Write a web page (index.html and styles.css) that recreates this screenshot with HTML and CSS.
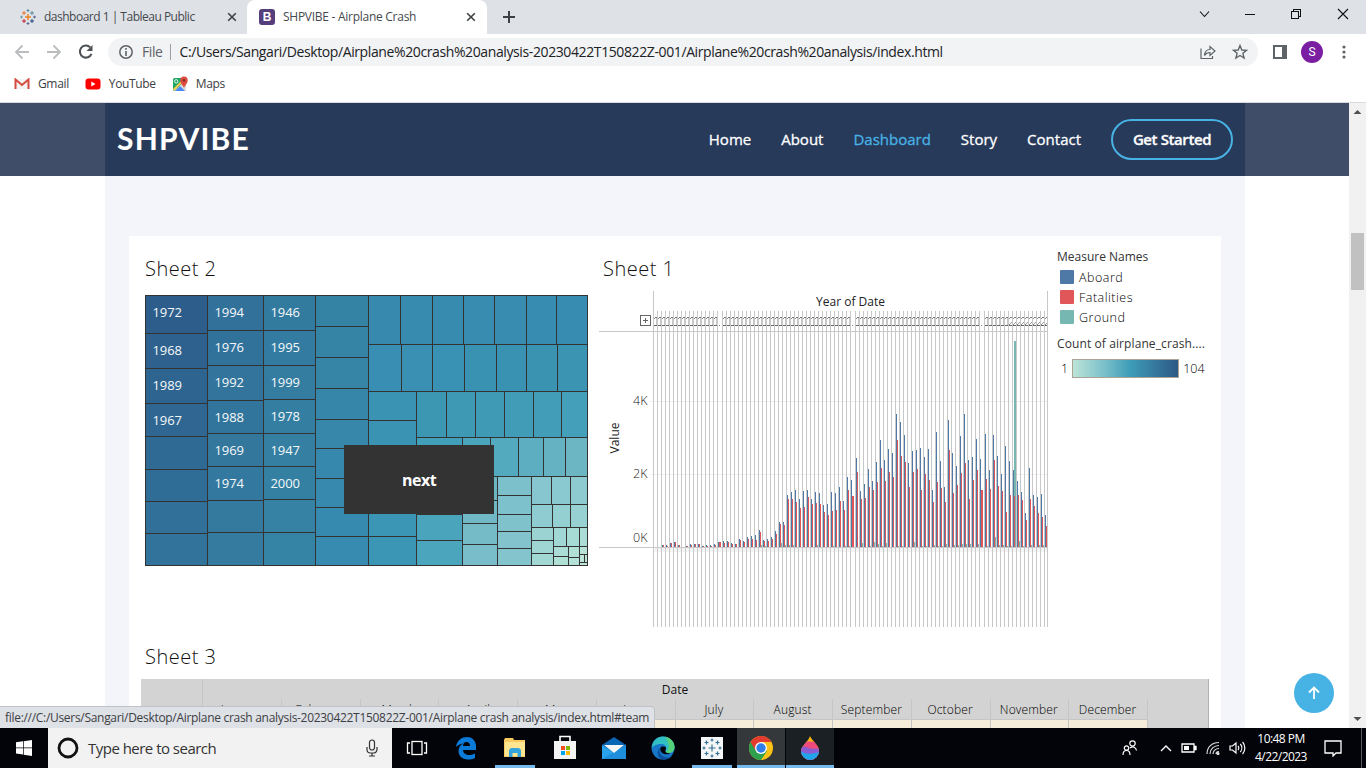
FILE: index.html
```html
<!DOCTYPE html>
<html lang="en">
<head>
<meta charset="utf-8">
<title>SHPVIBE - Airplane Crash</title>
<link rel="stylesheet" href="styles.css">
</head>
<body>
<div class="tabs">
  <div class="tab">
    <svg class="tab-icon" width="16" height="16" viewBox="0 0 16 16" fill="none" stroke-width="1">
      <path d="M8 5v6M5 8h6" stroke="#eb8124" stroke-width="1.5"/>
      <path d="M4 2v4M2 4h4" stroke="#e8762c"/><path d="M12 2v4M10 4h4" stroke="#59879b"/>
      <path d="M4 10v4M2 12h4" stroke="#c72037"/><path d="M12 10v4M10 12h4" stroke="#1f457e"/>
      <path d="M8 0v3M6.600 1.500h2.800" stroke="#59879b"/><path d="M8 13v3M6.600 14.500h2.800" stroke="#5c6692"/>
      <path d="M0 8h3M1.500 6.600v2.800" stroke="#7099a6"/><path d="M13 8h3M14.500 6.600v2.800" stroke="#5c6692"/>
    </svg>
    <span class="tab-title t1">dashboard 1 | Tableau Public</span>
    <svg class="tab-close" width="10" height="10" viewBox="0 0 10 10"><path d="M1.200 1.200l7.600 7.600M8.800 1.200l-7.600 7.600" stroke="#3c4043" stroke-width="1.600"/></svg>
  </div>
  <div class="tab active">
    <span class="boot">B</span>
    <span class="tab-title t2">SHPVIBE - Airplane Crash</span>
    <svg class="tab-close" width="10" height="10" viewBox="0 0 10 10"><path d="M1.200 1.200l7.600 7.600M8.800 1.200l-7.600 7.600" stroke="#3c4043" stroke-width="1.600"/></svg>
  </div>
  <svg class="plus" width="12" height="12" viewBox="0 0 12 12"><path d="M6 0v12M0 6h12" stroke="#3c4043" stroke-width="2"/></svg>
  <svg class="window-controls" width="150" height="14" viewBox="0 0 150 14" fill="none" stroke="#111" stroke-width="1.1">
    <path d="M1 4.500l4.500 5 4.500-5"/>
    <path d="M46 7.500h10" shape-rendering="crispEdges"/>
    <path d="M92.500 4.500h7v7h-7zM94.500 4.500v-2h7v7h-2" shape-rendering="crispEdges"/>
    <path d="M139 2l10 10M149 2l-10 10"/>
  </svg>
</div>

<div class="toolbar">
  <svg class="nav-arrows" width="84" height="20" viewBox="0 0 84 20" fill="none" stroke-width="1.800">
    <path d="M15 10H2M8.500 3.500L2 10l6.500 6.500" stroke="#babcbe"/>
    <path d="M33 10h13M39.500 3.500L46 10l-6.500 6.500" stroke="#babcbe"/>
    <path d="M76.200 5.400A6 6 0 1 0 77.500 11.800" stroke="#4d5155" stroke-width="2"/>
    <path d="M78.500 3v6h-6z" fill="#4d5155"/>
  </svg>
  <div class="omnibox">
    <svg width="14" height="14" viewBox="0 0 14 14"><circle cx="7" cy="7" r="6.200" fill="none" stroke="#5f6368" stroke-width="1.500"/><path d="M7 6v5M7 3v1.700" stroke="#5f6368" stroke-width="1.600"/></svg>
    <span class="scheme">File</span>
    <span class="url">C:/Users/Sangari/Desktop/Airplane%20crash%20analysis-20230422T150822Z-001/Airplane%20crash%20analysis/index.html</span>
    <svg class="omni-actions" width="48" height="16" viewBox="0 0 48 16" fill="none" stroke="#5f6368" stroke-width="1.200">
      <path d="M1 4.500V14.500h11.500V12"/><path d="M4.500 11.500c.3-4 2.500-6 5.500-6V2.500l5 4.500-5 4.500V8.500c-2.500 0-4.200 1-5.500 3z"/>
      <path d="M40 1.500l1.800 4.500 4.700.3-3.600 3 1.200 4.700L40 11.500 35.900 14l1.200-4.700-3.600-3 4.700-.3z" stroke-width="1.400"/>
    </svg>
  </div>
  <svg class="panel-icon" width="14" height="14" viewBox="0 0 14 14"><path d="M1 1h12v12H1z" fill="#fff" stroke="#5f6368" stroke-width="2"/><path d="M9 1h4v12H9z" fill="#5f6368"/></svg>
  <span class="avatar">S</span>
  <svg class="kebab" width="4" height="14" viewBox="0 0 4 14" fill="#5f6368"><circle cx="2" cy="2" r="1.600"/><circle cx="2" cy="7" r="1.600"/><circle cx="2" cy="12" r="1.600"/></svg>
</div>

<div class="bookmarks">
  <svg width="16" height="12" viewBox="0 0 16 12"><path d="M1 1h14v10H1z" fill="#f3f3f3"/><path d="M1.500 11V1.500L8 7l6.500-5.500V11" fill="none" stroke="#d54b3d" stroke-width="2"/></svg>
  <span class="b1">Gmail</span>
  <svg width="16" height="12" viewBox="0 0 16 12"><rect x=".5" y=".5" width="15" height="11" rx="3" fill="#f00"/><path d="M6.300 3.500v5L10.500 6z" fill="#fff"/></svg>
  <span class="b2">YouTube</span>
  <svg width="16" height="16" viewBox="0 0 16 16"><rect x="1" y="2" width="13" height="13" rx="1.500" fill="#1fa463"/><path d="M2 15L14 4v11z" fill="#dcdcdc"/><path d="M3 15l5-5 5 5z" fill="#4a89f3"/><path d="M1.500 14L13 2.500" stroke="#fcd04b" stroke-width="2"/><circle cx="4.200" cy="5.300" r="1.700" fill="none" stroke="#fff" stroke-width=".9"/><path d="M12 12C11 9 8.300 7.500 8.300 4.200a3.700 3.700 0 0 1 7.400 0C15.700 7.500 13 9 12 12z" fill="#dd4b3e"/><circle cx="12" cy="4.200" r="1.300" fill="#822f2b"/></svg>
  <span class="b3">Maps</span>
</div>

<div class="viewport">
  <div class="page">
    <header class="site-header">
      <div class="container">
        <span class="logo">SHPVIBE</span>
        <nav>
          <a>Home</a><a>About</a><a class="current">Dashboard</a><a>Story</a><a>Contact</a>
          <a class="get-started">Get Started</a>
        </nav>
      </div>
    </header>
    <section class="container team">
      <div class="card">
        <div class="sheets">
          <div class="sheet2">
            <h2>Sheet 2</h2>
            <div class="treewrap">
              <svg id="treemap" width="443" height="271" viewBox="145 295 443 271"></svg>
              <div class="next">next</div>
            </div>
          </div>
          <div class="sheet1">
            <h2>Sheet 1</h2>
            <svg id="bars" width="450" height="338" viewBox="599 290 450 338" shape-rendering="crispEdges"></svg>
          </div>
          <div class="legend">
            <div class="legend-title m">Measure Names</div>
            <div class="item"><i class="aboard"></i><span>Aboard</span></div>
            <div class="item"><i class="fatal"></i><span>Fatalities</span></div>
            <div class="item"><i class="ground"></i><span>Ground</span></div>
            <div class="legend-title c">Count of airplane_crash....</div>
            <div class="ramp-row"><span>1</span><i class="ramp"></i><span>104</span></div>
          </div>
        </div>
        <h2 class="s3">Sheet 3</h2>
        <div class="table">
          <div class="corner"></div>
          <div class="months">
            <div class="date">Date</div>
            <div class="month-row"><span>January</span><span>February</span><span>March</span><span>April</span><span>May</span><span>June</span><span>July</span><span>August</span><span>September</span><span>October</span><span>November</span><span>December</span></div>
            <div class="values"><i></i><i></i><i></i><i></i><i></i><i></i><i></i><i></i><i></i><i></i><i></i><i></i></div>
          </div>
          <div class="corner-end"></div>
        </div>
      </div>
    </section>
    <div class="to-top"><svg width="14" height="14" viewBox="0 0 14 14" fill="none" stroke="#fff" stroke-width="1.800"><path d="M7 13V1.500M2 6.500l5-5 5 5"/></svg></div>
    <div class="status"><span>file:///C:/Users/Sangari/Desktop/Airplane crash analysis-20230422T150822Z-001/Airplane crash analysis/index.html#team</span></div>
  </div>
  <div class="scrollbar">
    <svg width="17" height="17" viewBox="0 0 17 17"><path d="M4.500 11h8L8.500 7z" fill="#505050"/></svg>
    <div class="thumb"></div>
    <svg width="17" height="17" viewBox="0 0 17 17"><path d="M4.500 6h8l-4 4z" fill="#505050"/></svg>
  </div>
</div>

<div class="taskbar">
  <div class="start"><svg width="16" height="16" viewBox="0 0 16 16" fill="#fff"><path d="M0 2.300L7 1.300v6.300H0zM7.700 1.200L16 0v7.600H7.700zM0 8.300h7v6.300l-7-1zM7.700 8.300H16V16l-8.300-1.200z"/></svg></div>
  <div class="search">
    <svg width="22" height="22" viewBox="0 0 22 22"><circle cx="11" cy="11" r="9" fill="none" stroke="#111" stroke-width="2.800"/></svg>
    <span>Type here to search</span>
    <svg width="12" height="18" viewBox="0 0 12 18" fill="none" stroke="#333" stroke-width="1.200"><rect x="3.500" y="1" width="5" height="10" rx="2.500"/><path d="M1 8v2.500a3.500 3.500 0 0 0 3.500 3.500h3A3.500 3.500 0 0 0 11 10.500V8M6 14v3M3 17h6"/></svg>
  </div>
  <div class="app"><svg width="22" height="16" viewBox="0 0 22 16" fill="none" stroke="#fff" stroke-width="1.300"><rect x="6" y="1.500" width="10" height="13"/><path d="M4 3H1.500v10H4M18 3h2.500v10H18"/></svg></div>
  <div class="app"><svg width="22" height="24" viewBox="0 0 22 24"><path d="M1 11C2 4 7 1 12 1c6 0 9 5 9 9v4H8c0 3 3 5 6 5 2.500 0 4.500-.7 6-1.500v4.500c-2 1.200-4.500 1.500-7 1.500-6 0-9.500-4-9.500-8.500 0-3 1.500-6 4.500-7.500C5 8 3 9 1 11zM8 10h7c0-2.500-1.500-4-3.500-4S8 7.500 8 10z" fill="#0a7bd8"/></svg></div>
  <div class="app open exp"><svg width="22" height="22" viewBox="0 0 22 22"><path d="M0 3l1-2h8l1 2h11v17H0z" fill="#f7cb60"/><path d="M1 5h20v14H1z" fill="#ffe590"/><path d="M5 20v-7l2-2h8l2 2v7h-3.500v-4h-5v4z" fill="#35a3dc"/></svg></div>
  <div class="app"><svg width="24" height="26" viewBox="0 0 24 26"><path d="M7 7V1.500h10V7" fill="none" stroke="#fff" stroke-width="1.600"/><path d="M1 6h22v18H1z" fill="#f4f4f4"/><path d="M8 11h4v4H8z" fill="#f25022"/><path d="M13 11h4v4h-4z" fill="#7fba00"/><path d="M8 16h4v4H8z" fill="#00a4ef"/><path d="M13 16h4v4h-4z" fill="#ffb900"/></svg></div>
  <div class="app"><svg width="24" height="24" viewBox="0 0 24 24"><path d="M0 9L12 1l12 8v14H0z" fill="#0b65b5"/><path d="M0 9l12 8 12-8v14H0z" fill="#2ba3ea"/><path d="M0 23L24 9v14z" fill="#1d8fdd"/><path d="M2 9h20l-10 8z" fill="#f6f6f6"/></svg></div>
  <div class="app"><svg width="24" height="24" viewBox="0 0 24 24"><circle cx="12" cy="12" r="11.500" fill="#1676c8"/><path d="M1 12C1 5 6 .5 12 .5S23.500 5 23.500 11c0 4-3 6-6 6-2 0-3-1-3-2 0-1 .8-1.500.8-3 0-2-2-4-5.300-4C6 8 2.500 9.500 1 12z" fill="#31bfc4"/><path d="M14 .8c6 1 9.500 5.500 9.500 10.200 0 4-3 6-6 6-2 0-3-1-3-2 4 1 5-7-.5-14.200z" fill="#55d078"/><path d="M9 12c-2 5 2 9.500 8 9.500 1.500 0 3-.5 4.500-2-2 3-6 4.500-9.500 4C6.500 23 5 15 9 12z" fill="#0d4f9c"/><path d="M9.500 11.500c1-1.500 4-1.500 5.500 0 .3 1.500-.6 2.300-.6 3.500 0 1.500 2 2.500 5 2.300-2 1.400-6 1.500-8.200-.3-1.700-1.500-2.300-3.700-1.700-5.500z" fill="#020409"/></svg></div>
  <div class="app open tab-app"><svg width="22" height="22" viewBox="0 0 22 22" fill="none" stroke="#35708f" stroke-width="1.200"><path d="M0 0h22v22H0z" fill="#f4f6f8" stroke="none"/><path d="M11 7.500v7M7.500 11h7M5.500 3.500v4M3.500 5.500h4M16.500 3.500v4M14.500 5.500h4M5.500 14.500v4M3.500 16.500h4M16.500 14.500v4M14.500 16.500h4M11 1.500v3M9.500 3h3M11 17.500v3M9.500 19h3M1.500 11h3M3 9.500v3M17.500 11h3M19 9.500v3"/></svg></div>
  <div class="app open chrome"><svg width="24" height="24" viewBox="0 0 24 24"><circle cx="12" cy="12" r="12" fill="#fbc116"/><path d="M12 12L1.600 6A12 12 0 0 0 12 24l6-9z" fill="#2da14c"/><path d="M12 6h10.400A12 12 0 0 0 1.600 6l5.200 9z" fill="#e33b2e"/><circle cx="12" cy="12" r="6" fill="#fff"/><circle cx="12" cy="12" r="4.700" fill="#2f7de9"/></svg></div>
  <div class="app open paint"><svg width="20" height="24" viewBox="0 0 20 24"><defs><clipPath id="drop"><path d="M10 0c2 5 9 9 9 15a9 9 0 0 1-18 0C1 10 8 6 10 0z"/></clipPath></defs><g clip-path="url(#drop)"><path d="M0 0h20v24H0z" fill="#f9b414"/><path d="M0 5l20 1v18H0z" fill="#ee4b7c"/><path d="M0 11c7-2 10 4 20 1v12H0z" fill="#8c5bd0"/><path d="M0 15c7 4 12 3 20 1v8H0z" fill="#1fa5ea"/></g></svg></div>
  <div class="tray">
    <svg width="16" height="16" viewBox="0 0 16 16" fill="none" stroke="#fff" stroke-width="1.200"><circle cx="10.500" cy="3.500" r="2.700"/><circle cx="4.500" cy="8" r="2.200"/><path d="M1 15c0-3 1.500-4.500 3.500-4.500S8 12 8 15M8 8c3-2.500 6-.5 6.500 2.500"/></svg>
    <svg width="12" height="8" viewBox="0 0 12 8" fill="none" stroke="#fff" stroke-width="1.400"><path d="M1 7l5-5 5 5"/></svg>
    <svg width="16" height="10" viewBox="0 0 16 10"><path d="M1 1h12v8H1zM14 3.500h1v3h-1z" fill="none" stroke="#fff" stroke-width="1.300"/><path d="M3 3h5v4H3z" fill="#fff"/></svg>
    <svg width="14" height="14" viewBox="0 0 14 14" fill="none" stroke="#ddd" stroke-width="1.200"><path d="M1 13C1 6 6 1.500 13 1.500M4 13c0-5 4-8.500 9-8.500M7 13c0-3 2.500-5.500 6-5.500M10 13c0-1.500 1.500-2.500 3-2.500"/><circle cx="12" cy="12.500" r="1" fill="#fff"/></svg>
    <svg width="17" height="14" viewBox="0 0 17 14" fill="none" stroke="#fff" stroke-width="1.200"><path d="M1 5h2.500L7 2v10L3.500 9H1zM9 5c1 1 1 3 0 4M11.300 3c2 2.300 2 5.700 0 8M13.600 1c3 3.500 3 8.500 0 12"/></svg>
    <div class="clock"><span>10:48 PM</span><span>4/22/2023</span></div>
    <svg width="18" height="18" viewBox="0 0 18 18" fill="none" stroke="#fff" stroke-width="1.300"><path d="M1 2h16v12h-5l-3 3v-3H1z"/></svg>
    <i class="peek"></i>
  </div>
</div>
<script src="charts.js"></script>
</body>
</html>
```
FILE: styles.css
```css
* { box-sizing: border-box; }
body { margin: 0; width: 1366px; height: 768px; overflow: hidden; background: #fff; font-family: "Open Sans", "Noto Sans", sans-serif; display: flex; flex-direction: column; }
svg { flex: none; display: block; }
span { white-space: nowrap; }

.tabs { height: 34px; flex: none; background: #dee1e6; display: flex; align-items: center; font-size: 12px; color: #45494d; }
.tab { width: 247px; height: 34px; display: flex; align-items: center; padding: 0 10px 0 20px; }
.tab.active { width: 240px; background: #fff; border-radius: 8px 8px 0 0; padding: 0 11px 0 12px; }
.tab-title { margin-left: 8px; flex: 1; padding-bottom: 1px; }
.t1 { letter-spacing: -.5px; }
.t2 { letter-spacing: -.27px; }
.boot { width: 16px; height: 16px; border-radius: 3px; background: #563d7c; color: #fff; font: bold 12px/16px "Liberation Sans", sans-serif; text-align: center; }
.plus { margin-left: 16px; }
.window-controls { margin-left: auto; margin-right: 17px; margin-bottom: 6px; }

.toolbar { height: 36px; flex: none; display: flex; align-items: center; padding-left: 14px; }
.omnibox { margin-left: 10px; width: 1150px; height: 28px; border-radius: 14px; background: #f1f3f4; display: flex; align-items: center; padding: 0 10px 0 11px; font-size: 14px; }
.scheme { margin-left: 9px; color: #5f6368; letter-spacing: -.4px; padding-right: 7px; border-right: 1px solid #9aa0a6; line-height: 16px; }
.url { margin-left: 9px; color: #202124; letter-spacing: -.39px; padding-bottom: 1px; }
.omni-actions { margin-left: auto; }
.panel-icon { margin-left: 15px; }
.avatar { margin-left: 14px; width: 22px; height: 22px; border-radius: 50%; background: #7b1fa2; color: #fff; font: 12px/22px Roboto, sans-serif; text-align: center; }
.kebab { margin-left: 19px; }

.bookmarks { height: 33px; flex: none; display: flex; align-items: center; padding: 0 0 5px 14px; border-bottom: 1px solid #d9dbde; font-size: 12px; color: #3c4043; }
.bookmarks span { margin-left: 8px; margin-right: 16px; }
.b1, .b2, .b3 { letter-spacing: -.35px; }

.viewport { height: 625px; flex: none; display: flex; }
.page { width: 1349px; height: 625px; overflow: hidden; position: relative; }
.site-header { height: 73px; background: #3f4d69; display: flex; justify-content: center; padding-left: 1px; }
.container { width: 1140px; }
.site-header .container { background: #283a5a; display: flex; align-items: center; justify-content: space-between; padding: 0 12px; }
.logo { font: 700 30px/40px "Lato", sans-serif; color: #fff; letter-spacing: 1.2px; padding-bottom: 4px; }
nav { display: flex; align-items: center; gap: 30px; font-size: 15px; font-weight: 400; color: #fff; -webkit-text-stroke: .3px currentColor; }
nav a { padding-bottom: 1px; }
.current { color: #47b2e4; }
.get-started { width: 122px; height: 41px; border: 2px solid #47b2e4; border-radius: 21px; text-align: center; line-height: 37px; font-weight: 600; letter-spacing: -.4px; padding: 0; }
.team { margin-left: 105px; background: #f3f5fa; height: 552px; padding: 60px 24px 0; }
.card { background: #fff; height: 492px; padding: 0 12px; }
h2 { margin: 0; font-size: 20px; line-height: 27px; font-weight: 300; color: #111; letter-spacing: .5px; }
.sheets { display: flex; height: 407px; }
.sheet2 { width: 458px; padding: 19px 0 0 4px; }
.sheet1 { width: 458px; padding-top: 19px; }
.sheet1 h2 { padding-left: 4px; }
.treewrap { margin-top: 13px; position: relative; }
.next { position: absolute; left: 199px; top: 150px; width: 150px; height: 69px; background: #333; color: #fff; font-weight: 700; font-size: 16px; line-height: 70px; text-align: center; letter-spacing: -.5px; }
#treemap text { font-size: 13px; fill: #f5f8fa; letter-spacing: -.1px; }
#bars { margin-top: 8px; }
#bars text { font-size: 12px; fill: #222; }
#bars .axis { fill: #222; font-weight: 300; font-size: 12.5px; }
.legend { padding-top: 13px; font-size: 12px; color: #000; }
.legend-title { line-height: 16px; color: #333; white-space: nowrap; }
.legend-title.c { margin: 9px 0 0; letter-spacing: .1px; }
.legend-title.m { margin-bottom: 2px; }
.item { height: 20px; display: flex; align-items: center; padding-left: 3px; gap: 5px; font-weight: 300; font-size: 12.5px; letter-spacing: .5px; }
.item i { width: 14px; height: 14px; border-radius: 1px; }
.aboard { background: #4e79a7; }
.fatal { background: #e15759; }
.ground { background: #76b7b2; }
.ramp-row { display: flex; align-items: center; height: 19px; margin-top: 7px; padding-left: 4px; gap: 4px; font-size: 12.5px; font-weight: 300; }
.ramp-row span { padding-bottom: 1px; }
.ramp { width: 107px; height: 19px; flex: none; border: 1px solid #aaa396; background: linear-gradient(90deg, #bce4d8, #7fc2cb 28%, #3c9cb7 55%, #35759c 80%, #2c5985); }
.s3 { padding: 0 0 0 4px; height: 36px; }
.table { display: flex; height: 49px; width: 1068px; font-size: 12px; color: #111; background: #d3d3d3; border-right: 1px solid #b0b0b0; }
.corner { width: 62px; border-right: 1px solid #c6c6c6; }
.months { width: 945px; }
.date { height: 20px; line-height: 21px; text-align: center; padding-right: 1px; }
.month-row { display: grid; grid-template-columns: repeat(12, 1fr); height: 21px; line-height: 21px; border-bottom: 1px solid #c6c6c6; text-align: center; font-weight: 300; color: #000; letter-spacing: .15px; }
.month-row span, .values i { border-right: 1px solid #c6c6c6; }
.month-row span { padding-right: 1px; }
.values { display: grid; grid-template-columns: repeat(12, 1fr); height: 8px; background: #f5ecd9; }
.corner-end { flex: 1; }
.to-top { position: absolute; left: 1294px; top: 570px; width: 40px; height: 40px; border-radius: 50%; background: #47b2e4; display: flex; align-items: center; justify-content: center; }
.status { position: absolute; left: 0; bottom: 0; width: 655px; height: 22px; background: #dee1e6; border: 1px solid #bfc2c6; border-left: 0; border-bottom: 0; border-radius: 0 4px 0 0; font-size: 12px; line-height: 21px; color: #3c4043; padding-left: 5px; }
.status span { letter-spacing: -.3px; }
.scrollbar { width: 17px; background: #f1f1f1; display: flex; flex-direction: column; justify-content: space-between; position: relative; }
.thumb { height: 57px; width: 13px; margin: 113px 2px auto; background: #c1c1c1; }

.taskbar { height: 40px; flex: none; background: #020409; display: flex; align-items: center; }
.start { width: 48px; padding-left: 16px; }
.search { width: 344px; height: 40px; background: #f2f2f2; display: flex; align-items: center; padding: 0 14px 0 9px; font-size: 15px; color: #333; }
.search span { margin-left: 9px; flex: 1; letter-spacing: -.52px; }
.app { width: 49px; height: 40px; display: flex; align-items: center; justify-content: center; }
.open { border-bottom: 3px solid #76b9ed; padding-top: 3px; }
.exp { width: 40px; margin: 0 5px; }
.tab-app { width: 40px; margin: 0 5px; }
.chrome { width: 48px; background: #34383b; }
.paint { width: 48px; background: #1b2025; margin-left: 1px; }
.tray { margin-left: auto; display: flex; align-items: center; color: #fff; font-size: 12px; }
.tray svg + svg { margin-left: 9px; }
.tray svg:nth-child(2) { margin-left: 22px; }
.clock { width: 70px; margin-right: 8px; text-align: center; line-height: 18px; display: flex; flex-direction: column; letter-spacing: -.55px; }
.peek { width: 1px; height: 40px; background: #55585c; margin-left: 19px; margin-right: 4px; }
```
FILE: charts.js
```js
const NS = 'http://www.w3.org/2000/svg';
function add(parent, tag, attrs, text) {
  const el = document.createElementNS(NS, tag);
  for (const k in attrs) el.setAttribute(k, attrs[k]);
  if (text) el.textContent = text;
  parent.appendChild(el);
}
function mix(a, b, t) {
  const p = (c, i) => parseInt(c.substr(1 + 2 * i, 2), 16);
  return 'rgb(' + [0, 1, 2].map(i => Math.round(p(a, i) + (p(b, i) - p(a, i)) * t)).join(',') + ')';
}

// Treemap strips: direction, start and end across, cell boundaries, colour range, labels
const strips = [
  ['v', 145, 207, [295, 333, 368, 403, 436, 469, 501, 533, 565], '#2d5e8b', '#31739b', ['1972', '1968', '1989', '1967']],
  ['v', 207, 263, [295, 330, 365, 400, 433, 466, 500, 532, 565], '#31719a', '#347b9f', ['1994', '1976', '1992', '1988', '1969', '1974']],
  ['v', 263, 315, [295, 330, 365, 399, 433, 466, 499, 532, 565], '#337a9f', '#3583a5', ['1946', '1995', '1999', '1978', '1947', '2000']],
  ['v', 315, 368, [295, 326, 357, 388, 419, 448, 478, 507, 536, 565], '#3583a4', '#378bb0'],
  ['h', 295, 344, [368, 400, 432, 463, 494, 526, 556, 587], '#378aae', '#378db1'],
  ['h', 344, 391, [368, 401, 432, 464, 496, 526, 557, 587], '#388fb3', '#3b94b2'],
  ['v', 368, 416, [391, 420, 449, 478, 507, 536, 565], '#3a93b2', '#3b95b4'],
  ['h', 391, 437, [416, 446, 475, 504, 533, 561, 587], '#3c97b3', '#439fba'],
  ['v', 416, 462, [437, 463, 489, 514, 540, 565], '#429fba', '#4ba5bd'],
  ['h', 437, 476, [462, 490, 518, 543, 565, 587], '#4ba6bd', '#6cb6c3'],
  ['v', 462, 497, [476, 500, 523, 544, 565], '#6cb6c4', '#78bdc9'],
  ['v', 497, 531, [476, 495, 514, 531, 548, 565], '#7bc0cb', '#84c4cd'],
  ['h', 476, 504, [531, 551, 570, 587], '#87c6ce', '#8dcbd0'],
  ['h', 504, 527, [531, 552, 570, 587], '#8fccd1', '#98d1d2'],
  ['v', 531, 553, [527, 540, 553, 565], '#9bd3d2', '#a2d8d4'],
  ['h', 527, 546, [553, 566, 579, 587], '#a1d7d4', '#abdcd5'],
  ['v', 553, 568, [546, 556, 565], '#abdcd5', '#b0dfd6'],
  ['v', 568, 579, [546, 557, 565], '#b0dfd6', '#b4e1d7'],
  ['v', 579, 587, [546, 554, 562, 565], '#b8e2d7', '#bce4d8'],
  ['h', 554, 562, [579, 584, 587], '#bce4d8', '#bce4d8']
];
const tree = document.getElementById('treemap');
for (const [dir, a, b, cuts, from, to, labels] of strips) {
  for (let i = 0; i < cuts.length - 1; i++) {
    const s = cuts[i], len = cuts[i + 1] - s, v = dir === 'v';
    const x = v ? a : s, y = v ? s : a;
    add(tree, 'rect', { x: x + .5, y: y + .5, width: v ? b - a : len, height: v ? len : b - a,
      fill: mix(from, to, i / Math.max(1, cuts.length - 2)), stroke: '#333' });
    if (labels && labels[i]) add(tree, 'text', { x: x + 7.5, y: y + 22 }, labels[i]);
  }
}

// Yearly bars: [aboard, fatalities, ground] heights
const blocks = [
  [653, [[0,0],[0,0],[2,2],[2,1],[4,4],[5,5],[2,2],[0,0],[1,1],[3,2],[3,3],[3,3],[1,1],[2,1],[2,1],[3,2],[5,5]]],
  [722, [[6,4],[6,5],[4,3],[3,3],[8,7],[6,5],[10,8],[11,8],[12,7],[17,15,2],[7,6,1],[8,6],[10,8],[16,13],[25,23,4],[25,22,2],[52,48,2],[55,48,2],[57,45],[48,39],[56,40],[57,50],[48,43],[55,44,2],[54,43],[42,35],[43,32],[55,36,1],[54,37],[60,46],[46,37,1],[70,57,1],[67,51,1]]],
  [855, [[89,75],[56,48,4],[63,49],[78,60,1],[66,57,5],[85,65,3],[107,79,1],[87,66,4],[98,75],[94,70],[133,107,1],[125,91,1],[112,85],[84,60],[96,75,5],[97,78],[99,57,1],[90,73,1],[98,67],[57,45,2],[115,65,1],[86,59,1],[60,45,3],[127,97],[94,54,2],[81,62,2],[111,74,3],[133,84,3],[87,48,3],[90,67],[108,77,3],[88,57]]],
  [984, [[113,68,1],[77,58],[112,87,10],[91,61,2],[73,56,2],[101,35,1],[86,52,1],[77,51,206],[66,52,6],[55,47,1],[34,27],[79,48,2],[52,41],[50,34,2],[53,30,2],[32,21]]]
];
const c = document.getElementById('bars');
const rect = (x, y, width, height, fill) => { if (height > 0) add(c, 'rect', { x, y, width, height, fill }); };
rect(650, 401, 397, 1, '#efefef');
rect(650, 474, 397, 1, '#efefef');
rect(653, 548, 394, 4, '#f5f5f5');
blocks.forEach(([start, years], bi) => {
  years.forEach((v, i) => {
    const x = start + 4 * i;
    rect(x, 311, 1, 316, '#c8c8c8');
    const wide = bi < 3 && i === years.length - 1;
    const late = bi === 3 && i >= 6;
    if (wide) rect(x + 2, 325, 1, 1, '#888');
    else {
      rect(x + 1, 325, 3, 1, '#666');
      rect(x + 1, 318, 1, 1, '#888');
      rect(x + 2, 317, 2, 1, '#777');
      if (late) { rect(x + 1, 324, 1, 1, '#888'); rect(x + 2, 323, 1, 1, '#999'); rect(x + 3, 322, 1, 1, '#999'); }
      else rect(x + 3, 318, 1, 7, '#c8c8c8');
    }
    rect(x + 2, 547 - (v[2] || 0), 2, v[2] || 0, '#76b7b2');
    rect(x + 2, 547 - v[1], wide ? 2 : 1, v[1], '#e15759');
    rect(x + 1, 547 - v[0], 1, v[0], '#4e79a7');
  });
});
rect(653, 291, 1, 336, '#c8c8c8');
rect(1047, 291, 1, 336, '#c8c8c8');
rect(599, 331, 449, 1, '#c8c8c8');
rect(599, 547, 449, 1, '#c8c8c8');
add(c, 'rect', { x: 640.5, y: 315.5, width: 10, height: 10, rx: 1, fill: '#fff', stroke: '#666' });
rect(643, 320, 5, 1, '#666');
rect(645, 318, 1, 5, '#666');
add(c, 'text', { x: 850.5, y: 306, 'text-anchor': 'middle' }, 'Year of Date');
add(c, 'text', { x: 647.5, y: 405, 'text-anchor': 'end', class: 'axis' }, '4K');
add(c, 'text', { x: 647.5, y: 478, 'text-anchor': 'end', class: 'axis' }, '2K');
add(c, 'text', { x: 647.5, y: 542, 'text-anchor': 'end', class: 'axis' }, '0K');
add(c, 'text', { transform: 'translate(619 438) rotate(-90)', 'text-anchor': 'middle' }, 'Value');
```
